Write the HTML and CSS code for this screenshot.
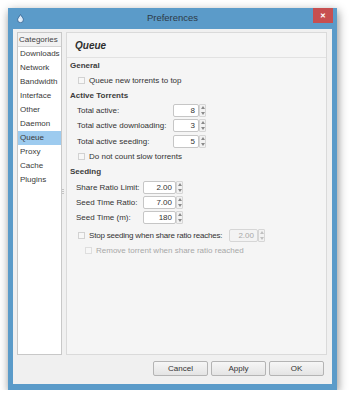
FILE: index.html
```html
<!DOCTYPE html>
<html>
<head>
<meta charset="utf-8">
<link rel="stylesheet" href="styles.css">
</head>
<body>
<div class="win">
  <div class="titlebar">
    <svg class="appicon" width="7" height="9" viewBox="0 0 7 9"><path d="M3.5 0.5 C2.5 2.5 0.6 4 0.6 5.8 A2.9 2.9 0 0 0 6.4 5.8 C6.4 4 4.5 2.5 3.5 0.5Z" fill="#dbe9f7" stroke="#2f5f8f" stroke-width="0.8"/><circle cx="2.6" cy="5.8" r="0.9" fill="#fff"/></svg>
    <span class="title">Preferences</span>
    <div class="close">&#x2715;</div>
  </div>
  <div class="client">
    <div class="main">
      <div class="cats">
        <div class="cats-head">Categories</div>
        <ul class="cats-list">
          <li>Downloads</li>
          <li>Network</li>
          <li>Bandwidth</li>
          <li>Interface</li>
          <li>Other</li>
          <li>Daemon</li>
          <li class="sel">Queue</li>
          <li>Proxy</li>
          <li>Cache</li>
          <li>Plugins</li>
        </ul>
      </div>
      <div class="splitter"><span class="grip"></span></div>
      <div class="panel">
        <div class="ptitle">Queue</div>
        <div class="pbody">
          <div class="row head">General</div>
          <div class="row cbrow"><span class="cbox"></span>Queue new torrents to top</div>
          <div class="row head">Active Torrents</div>
          <div class="row lrow"><span class="lab lab1">Total active:</span><span class="spin"><span class="sval w1">8</span><span class="sarr"><i class="up"></i><i class="dn"></i></span></span></div>
          <div class="row lrow"><span class="lab lab1">Total active downloading:</span><span class="spin"><span class="sval w1">3</span><span class="sarr"><i class="up"></i><i class="dn"></i></span></span></div>
          <div class="row lrow mt1"><span class="lab lab1">Total active seeding:</span><span class="spin"><span class="sval w1">5</span><span class="sarr"><i class="up"></i><i class="dn"></i></span></span></div>
          <div class="row cbrow"><span class="cbox"></span>Do not count slow torrents</div>
          <div class="row head">Seeding</div>
          <div class="row lrow2 mt1"><span class="lab lab2">Share Ratio Limit:</span><span class="spin"><span class="sval w2">2.00</span><span class="sarr"><i class="up"></i><i class="dn"></i></span></span></div>
          <div class="row lrow2"><span class="lab lab2">Seed Time Ratio:</span><span class="spin"><span class="sval w2">7.00</span><span class="sarr"><i class="up"></i><i class="dn"></i></span></span></div>
          <div class="row lrow2"><span class="lab lab2">Seed Time (m):</span><span class="spin"><span class="sval w2">180</span><span class="sarr"><i class="up"></i><i class="dn"></i></span></span></div>
          <div class="row cbrow mt3"><span class="cbox"></span><span class="lab lab3">Stop seeding when share ratio reaches:</span><span class="spin dis"><span class="sval w3">2.00</span><span class="sarr"><i class="up"></i><i class="dn"></i></span></span></div>
          <div class="row cbrow2 disabled"><span class="cbox"></span>Remove torrent when share ratio reached</div>
        </div>
      </div>
    </div>
    <div class="buttons">
      <button class="btn">Cancel</button>
      <button class="btn">Apply</button>
      <button class="btn">OK</button>
    </div>
  </div>
</div>
</body>
</html>
```

FILE: styles.css
```css
html, body {
  margin: 0;
  padding: 0;
  background: #ffffff;
}
body {
  font-family: "Liberation Sans", Arial, sans-serif;
  font-size: 8px;
  color: #333333;
}
.win {
  margin: 8px 0 0 8px;
  width: 329px;
  height: 382px;
  box-sizing: border-box;
  padding: 0 5px 6px 5px;
  background: #5b9bc9;
  box-shadow: 1px 3px 9px rgba(0, 0, 0, 0.45);
  display: flex;
  flex-direction: column;
}
.titlebar {
  position: relative;
  height: 21px;
  margin: 0 -5px;
  display: flex;
  align-items: center;
  justify-content: center;
  padding-bottom: 2px;
  box-sizing: border-box;
}
.title {
  font-size: 9.5px;
  color: #2e3a46;
}
.appicon {
  position: absolute;
  left: 9px;
  top: 6px;
}
.close {
  position: absolute;
  right: 4px;
  top: 0;
  width: 20px;
  height: 15px;
  background: #c74f50;
  color: #ffffff;
  font-size: 7px;
  font-weight: bold;
  display: flex;
  align-items: center;
  justify-content: center;
}
.client {
  flex: 1;
  background: #f0f0f0;
  padding: 3px 5px 0 4px;
  display: flex;
  flex-direction: column;
}
.main {
  height: 323px;
  display: flex;
}
.cats {
  width: 45px;
  box-sizing: border-box;
  border: 1px solid #c8c8c8;
  background: #ffffff;
}
.cats-head {
  height: 13px;
  line-height: 13px;
  border-bottom: 1px solid #d4d4d4;
  background: #f2f2f2;
  padding-left: 1px;
  color: #444;
}
.cats-list {
  list-style: none;
  margin: 0;
  padding: 0;
}
.cats-list li {
  height: 14px;
  line-height: 14px;
  padding-left: 2px;
  color: #3a3a3a;
}
.cats-list li.sel {
  background: #9dcbef;
}
.splitter {
  width: 4px;
  display: flex;
  align-items: center;
}
.grip {
  width: 2px;
  height: 6px;
  margin-top: -3px;
  background: repeating-linear-gradient(#c4c4c4 0 1px, transparent 1px 2px);
}
.panel {
  flex: 1;
  box-sizing: border-box;
  border: 1px solid #dadada;
  background: #f5f5f5;
}
.ptitle {
  height: 24px;
  line-height: 26px;
  border-bottom: 1px solid #e2e2e2;
  padding-left: 8px;
  font-size: 10px;
  font-weight: bold;
  font-style: italic;
  color: #2f2f2f;
}
.pbody {
  padding-left: 3px;
  display: flex;
  flex-direction: column;
}
.row {
  height: 15px;
  display: flex;
  align-items: center;
  white-space: nowrap;
}
.mt1 { margin-top: 1px; }
.mt3 { margin-top: 3px; }
.head {
  font-weight: bold;
  color: #3c3c3c;
}
.cbrow { padding-left: 8px; }
.cbrow2 { padding-left: 15px; }
.cbox {
  width: 5px;
  height: 5px;
  border: 1px solid #d2d2d2;
  background: #f7f7f7;
  margin-right: 4px;
  flex: none;
}
.disabled { color: #a8a8a8; }
.disabled .cbox { border-color: #dedede; }
.lrow { padding-left: 7px; }
.lrow2 { padding-left: 6px; }
.lab { display: inline-block; flex: none; }
.lab1 { width: 96px; }
.lab2 { width: 67px; }
.lab3 { width: 140px; letter-spacing: -0.2px; }
.spin {
  display: flex;
  height: 13px;
}
.sval {
  box-sizing: border-box;
  height: 13px;
  border: 1px solid #c6c6c6;
  border-radius: 2px;
  background: #ffffff;
  text-align: right;
  padding-right: 3px;
  line-height: 11px;
  color: #333;
}
.w1 { width: 26px; }
.w2 { width: 33px; }
.w3 { width: 29px; }
.sarr {
  box-sizing: border-box;
  width: 7px;
  height: 13px;
  border: 1px solid #d6d6d6;
  border-radius: 1px;
  background: #f2f2f2;
  display: flex;
  flex-direction: column;
  align-items: center;
  justify-content: space-around;
}
.sarr i {
  display: block;
  width: 0;
  height: 0;
  border-left: 2px solid transparent;
  border-right: 2px solid transparent;
}
.sarr .up { border-bottom: 3px solid #8a8a8a; }
.sarr .dn { border-top: 3px solid #8a8a8a; }
.spin.dis .sval {
  background: #f3f3f3;
  border-color: #d6d6d6;
  color: #a8a8a8;
}
.spin.dis .sarr .up { border-bottom-color: #c0c0c0; }
.spin.dis .sarr .dn { border-top-color: #c0c0c0; }
.buttons {
  margin-top: 6px;
  height: 15px;
  display: flex;
  justify-content: flex-end;
  gap: 3px;
  padding-right: 3px;
}
.btn {
  width: 55px;
  height: 15px;
  box-sizing: border-box;
  margin: 0;
  padding: 0;
  border: 1px solid #b4b4b4;
  border-radius: 2px;
  background: linear-gradient(#f6f6f6, #e4e4e4);
  font-family: "Liberation Sans", Arial, sans-serif;
  font-size: 8px;
  color: #333;
}
```
